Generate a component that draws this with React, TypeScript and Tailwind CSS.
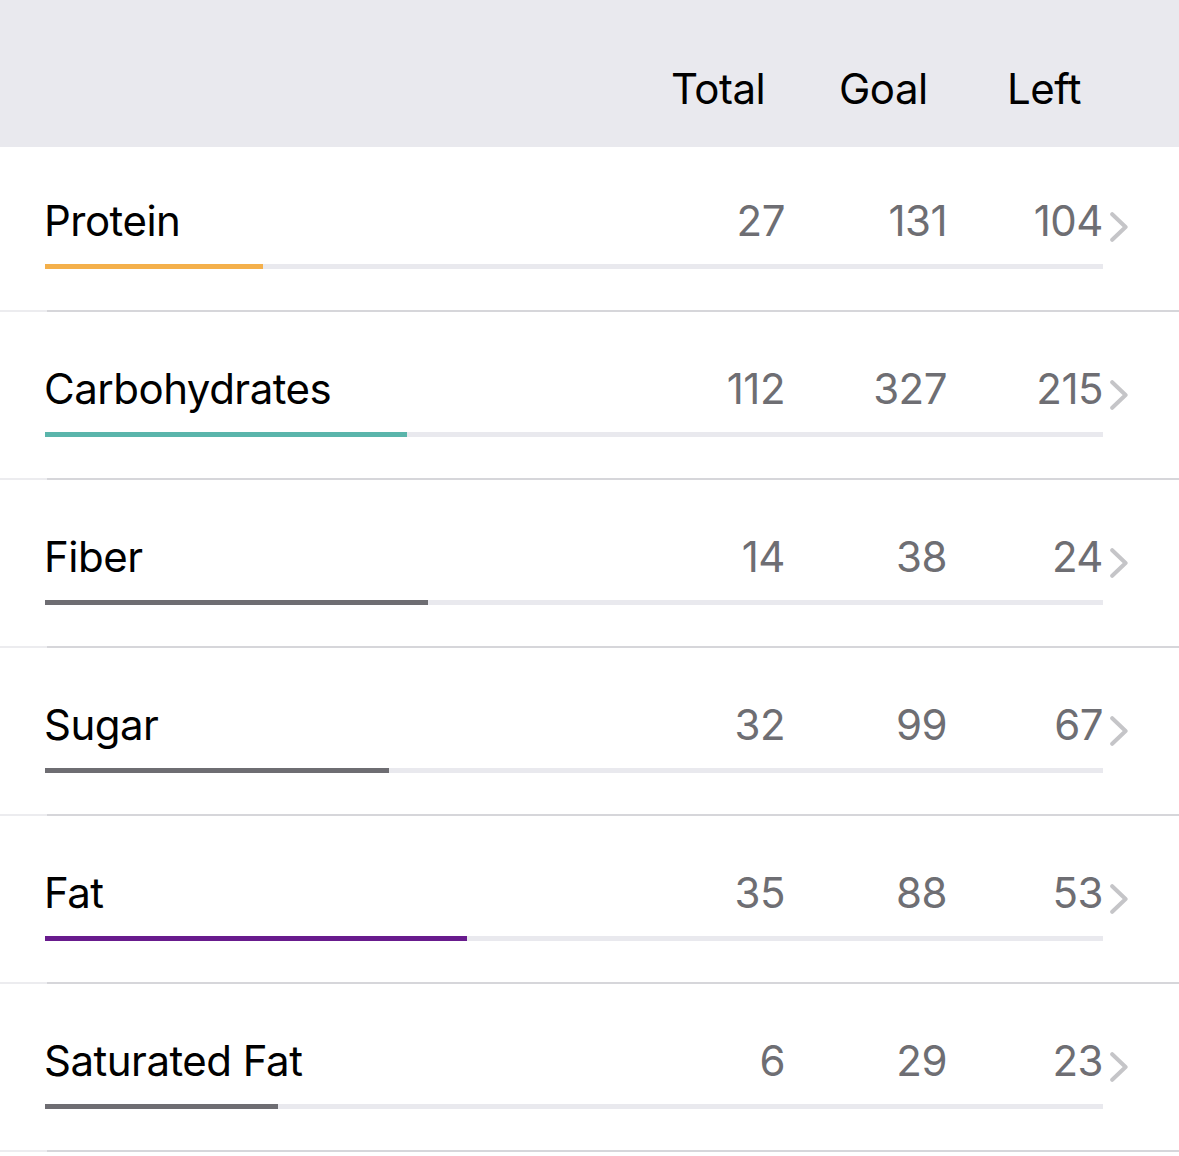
const rows: Row[] = [
  { name: "Protein", total: "27", goal: "131", left: "104", fill: 218, color: "bg-[#f4b04b]" },
  { name: "Carbohydrates", total: "112", goal: "327", left: "215", fill: 362, color: "bg-[#5ab5ab]" },
  { name: "Fiber", total: "14", goal: "38", left: "24", fill: 383, color: "bg-[#6e6d72]" },
  { name: "Sugar", total: "32", goal: "99", left: "67", fill: 344, color: "bg-[#6e6d72]" },
  { name: "Fat", total: "35", goal: "88", left: "53", fill: 422, color: "bg-[#681b8d]" },
  { name: "Saturated Fat", total: "6", goal: "29", left: "23", fill: 233, color: "bg-[#6e6d72]" },
];

const Chevron = () => (
  <svg width="18" height="30" viewBox="0 0 18 30" fill="none">
    <path d="M2.2 2.2 L15.6 15 L2.2 27.8" stroke="#c5c5c8" strokeWidth="4" strokeLinecap="round" strokeLinejoin="round" />
  </svg>
);

const NutrientRow = ({ row, first }: { row: Row; first: boolean }) => {
  return (
    <div className={first ? "pt-[53px]" : "pt-[56px]"}>
      <div className="flex h-[42px] leading-[42px] text-[42px] tracking-[-0.5px]">
        <div className="flex-1 pl-[44px] text-black">{row.name}</div>
        <div className="w-[140px] text-right text-[#6e6e73]">{row.total}</div>
        <div className="w-[162px] text-right text-[#6e6e73]">{row.goal}</div>
        <div className="w-[156px] text-right text-[#6e6e73]">{row.left}</div>
        <div className="w-[76px] pl-[7px] flex items-end">
          <Chevron />
        </div>
      </div>
      <div className="ml-[45px] mt-[22px] w-[1058px] h-[5px] bg-[#e9e9ee]">
        <div className={`h-full ${row.color}`} style={{ width: row.fill }} />
      </div>
      <div className="mt-[41px] flex h-[2px]">
        <div className="w-[47px] bg-[#ececef]" />
        <div className="flex-1 bg-[#d6d6da]" />
      </div>
    </div>
  );
};

const App = () => {
  return (
    <div className="w-[1179px] h-[1156px] bg-white overflow-hidden" style={{ fontFamily: "Inter, 'Noto Sans', sans-serif" }}>
      <div className="h-[147px] bg-[#e9e9ee] pt-[68px] flex text-[42px] leading-[42px] tracking-[-0.5px] text-black">
        <div className="w-[671px]" />
        <div className="w-[168px]">Total</div>
        <div className="w-[168px]">Goal</div>
        <div>Left</div>
      </div>
      {rows.map((row, i) => (
        <NutrientRow key={row.name} row={row} first={i === 0} />
      ))}
    </div>
  );
};

interface Row {
  name: string;
  total: string;
  goal: string;
  left: string;
  fill: number;
  color: string;
}

export default App;
